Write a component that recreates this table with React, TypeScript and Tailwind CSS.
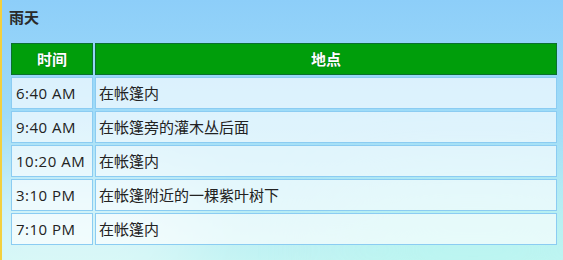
const rows = [
  { time: "6:40 AM", place: "在帐篷内" },
  { time: "9:40 AM", place: "在帐篷旁的灌木丛后面" },
  { time: "10:20 AM", place: "在帐篷内" },
  { time: "3:10 PM", place: "在帐篷附近的一棵紫叶树下" },
  { time: "7:10 PM", place: "在帐篷内" },
];

export default function App() {
  return (
    <div className="relative h-[260px] w-[563px] overflow-hidden border-l-2 border-[#f3d03e] bg-[linear-gradient(180deg,#8dcef9_0%,#9fdcf8_45%,#c3f4f3_100%)] pl-[7px] pr-[4px] pt-[7px] font-['Open_Sans','Noto_Sans_CJK_SC',sans-serif] text-[#222]">
      {/* clouds */}
      <div className="pointer-events-none absolute -left-[60px] top-[170px] h-[140px] w-[260px] rounded-full bg-white/40 blur-2xl" />
      <div className="pointer-events-none absolute right-[-40px] top-[200px] h-[100px] w-[260px] rounded-full bg-[#b6f7ee]/60 blur-2xl" />

      <div className="relative">
        <h1 className="text-[15px] font-semibold leading-[20px] text-[#2a2a2a]">雨天</h1>
        <table className="mt-[14px] w-[550px] table-fixed border-separate border-spacing-[2px]">
          <colgroup>
            <col className="w-[82px]" />
            <col />
          </colgroup>
          <thead>
            <tr>
              <th className="h-[32px] border border-[#0b7030] bg-[#009e0b] text-center text-[15px] font-bold text-white [text-shadow:0_0_1px_#0a5a20]">
                时间
              </th>
              <th className="h-[32px] border border-[#0b7030] bg-[#009e0b] text-center text-[15px] font-bold text-white [text-shadow:0_0_1px_#0a5a20]">
                地点
              </th>
            </tr>
          </thead>
          <tbody>
            {rows.map((r) => (
              <tr key={r.time}>
                <td className="h-[32px] whitespace-nowrap border border-[#8bccf2] bg-white/65 px-[4px] text-[15px] tracking-[0.5px]">
                  {r.time}
                </td>
                <td className="h-[32px] border border-[#8bccf2] bg-white/65 px-[3px] text-[15px]">
                  {r.place}
                </td>
              </tr>
            ))}
          </tbody>
        </table>
      </div>
    </div>
  );
}
